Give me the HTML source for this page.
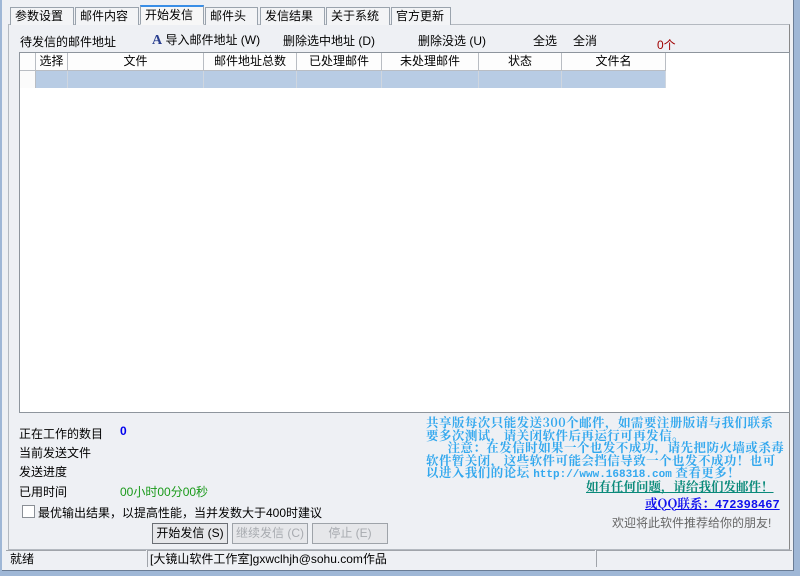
<!DOCTYPE html>
<html><head><meta charset="utf-8"><style>
*{margin:0;padding:0;box-sizing:border-box}
body{width:800px;height:576px;overflow:hidden;background:#9fb7d6;font-family:"Liberation Sans","SimSun","Noto Sans CJK SC",sans-serif;font-size:12px;color:#000;position:relative}
.win{position:absolute;left:2px;top:0;width:792px;height:571px;background:#eef0f4;border-right:1px solid #6a7c95;border-bottom:1px solid #6a7c95}
.abs{position:absolute;white-space:nowrap}
.tab{position:absolute;top:7px;height:18px;border:1px solid #9aa3ad;border-bottom:none;background:#f3f4f6;padding:1px 4px;line-height:15px}
.panel{position:absolute;left:6px;top:24px;width:782px;height:526px;border:1px solid #b4b9c0;border-right-color:#888}
.grid{position:absolute;left:19px;top:52px;width:771px;height:361px;background:#fff;border:1px solid #8e959d}
.hd{position:absolute;top:0;height:18px;border-right:1px solid #b9bdc3;border-bottom:1px solid #b9bdc3;background:#fdfdfd;text-align:center;line-height:17px}
.rw{position:absolute;top:18px;height:17px;background:#b8cce4;border-right:1px solid #cfd6df}
.blue{color:#33a8ee;font-weight:bold;font-family:"Noto Serif CJK SC","Liberation Serif",serif;font-size:12.5px;letter-spacing:0.45px;line-height:12.5px}
.mono{font-family:"Liberation Mono",monospace;font-size:11px;letter-spacing:0}
.btn{position:absolute;top:523px;height:21px;border:1px solid #6b6f75;background:#e6e7ea;text-align:center;line-height:19px}
.dis{color:#a8abb0;border-color:#9ea3a9}
</style></head><body>
<div class="win">
<div class="panel"></div>
<div class="tab" style="left:8px;width:64px">参数设置</div>
<div class="tab" style="left:73px;width:64px">邮件内容</div>
<div class="tab" style="left:138px;width:64px;top:5px;height:20px;background:#f7f7f7;border-top:2px solid #3a8ee6;border-bottom:1px solid #f7f7f7">开始发信</div>
<div class="tab" style="left:203px;width:53px">邮件头</div>
<div class="tab" style="left:258px;width:65px">发信结果</div>
<div class="tab" style="left:324px;width:64px">关于系统</div>
<div class="tab" style="left:389px;width:60px">官方更新</div>

<div class="abs" style="left:18px;top:33px">待发信的邮件地址</div>
<div class="abs" style="left:150px;top:31px"><b style="color:#2a3f8f;font-family:'Liberation Serif';font-size:14px">A</b> 导入邮件地址 (W)</div>
<div class="abs" style="left:281px;top:32px">删除选中地址 (D)</div>
<div class="abs" style="left:416px;top:32px">删除没选 (U)</div>
<div class="abs" style="left:531px;top:32px">全选</div>
<div class="abs" style="left:571px;top:32px">全消</div>
<div class="abs" style="left:655px;top:36px;color:#a00000">0个</div>

<div class="grid" style="left:17px">
<div class="hd" style="left:0;width:16px"></div>
<div class="hd" style="left:16px;width:32px">选择</div>
<div class="hd" style="left:48px;width:136px">文件</div>
<div class="hd" style="left:184px;width:93px">邮件地址总数</div>
<div class="hd" style="left:277px;width:85px">已处理邮件</div>
<div class="hd" style="left:362px;width:97px">未处理邮件</div>
<div class="hd" style="left:459px;width:83px">状态</div>
<div class="hd" style="left:542px;width:104px">文件名</div>
<div class="rw" style="left:0;width:16px;background:#fbfbfb;border-right:1px solid #b9bdc3"></div>
<div class="rw" style="left:16px;width:32px"></div>
<div class="rw" style="left:48px;width:136px"></div>
<div class="rw" style="left:184px;width:93px"></div>
<div class="rw" style="left:277px;width:85px"></div>
<div class="rw" style="left:362px;width:97px"></div>
<div class="rw" style="left:459px;width:83px"></div>
<div class="rw" style="left:542px;width:104px"></div>
</div>

<div class="abs" style="left:17px;top:425px">正在工作的数目</div>
<div class="abs" style="left:118px;top:424px;color:#0000ee;font-weight:bold">0</div>
<div class="abs" style="left:17px;top:444px">当前发送文件</div>
<div class="abs" style="left:17px;top:463px">发送进度</div>
<div class="abs" style="left:17px;top:483px">已用时间</div>
<div class="abs" style="left:118px;top:483px;color:#1a9a1a">00小时00分00秒</div>
<div class="abs" style="left:20px;top:505px;width:13px;height:13px;border:1px solid #8a8f96;background:#fff"></div>
<div class="abs" style="left:36px;top:504px">最优输出结果，以提高性能，当并发数大于400时建议</div>
<div class="btn" style="left:150px;width:76px">开始发信 (S)</div>
<div class="btn dis" style="left:230px;width:76px">继续发信 (C)</div>
<div class="btn dis" style="left:310px;width:76px">停止 (E)</div>

<div class="abs blue" style="left:424px;top:416px">共享版每次只能发送300个邮件，如需要注册版请与我们联系<br>要多次测试，请关闭软件后再运行可再发信。<br>&nbsp;&nbsp;&nbsp;&nbsp;&nbsp;&nbsp;注意：在发信时如果一个也发不成功，请先把防火墙或杀毒<br>软件暂关闭，这些软件可能会挡信导致一个也发不成功！也可<br>以进入我们的论坛 <span class="mono">http://www.168318.com</span> 查看更多！</div>
<div class="abs" style="left:584px;top:477px;color:#0a8a7a;font-weight:bold;text-decoration:underline;font-family:'Noto Serif CJK SC',serif;font-size:12.5px">如有任何问题，请给我们发邮件！</div>
<div class="abs" style="left:643px;top:494px;color:#1010ee;font-weight:bold;text-decoration:underline;font-family:'Noto Serif CJK SC',serif;font-size:12.5px">或QQ联系：<span class="mono" style="font-weight:bold;font-size:12px">472398467</span></div>
<div class="abs" style="left:610px;top:514px;color:#666">欢迎将此软件推荐给你的朋友!</div>

<div class="abs" style="left:4px;top:550px;width:140px;height:17px;border-top:1px solid #a0a4aa;padding-left:4px;line-height:16px">就绪</div>
<div class="abs" style="left:145px;top:550px;width:448px;height:17px;border-top:1px solid #a0a4aa;border-left:1px solid #a0a4aa;padding-left:2px;line-height:16px">[大镜山软件工作室]gxwclhjh@sohu.com作品</div>
<div class="abs" style="left:594px;top:550px;width:196px;height:17px;border-top:1px solid #a0a4aa;border-left:1px solid #a0a4aa"></div>
</div>
</body></html>
